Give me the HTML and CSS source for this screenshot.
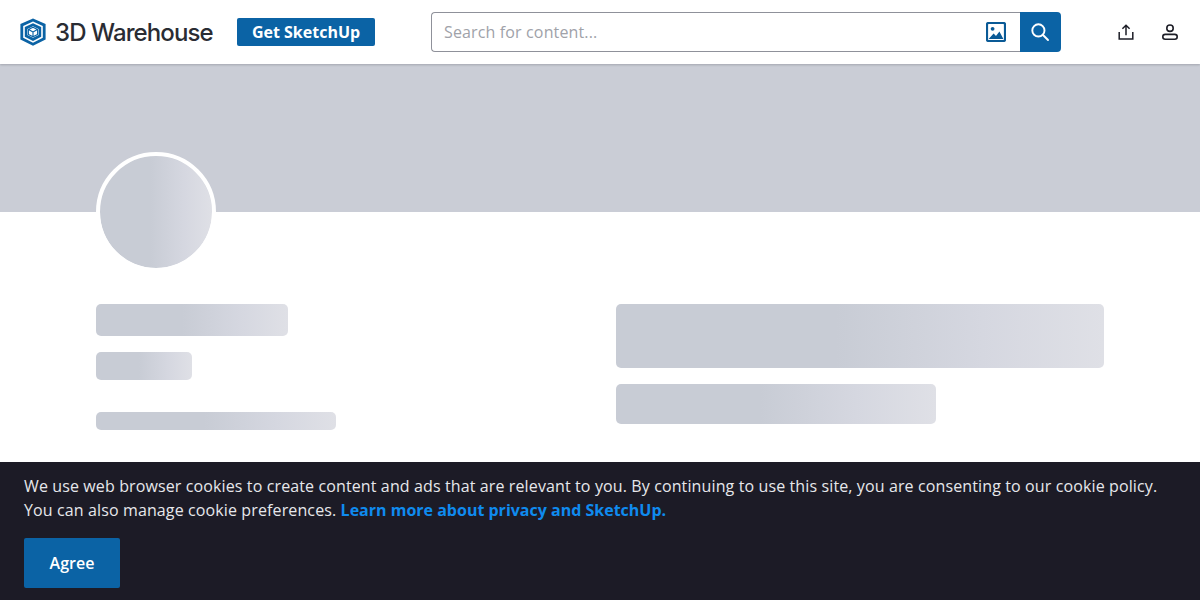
FILE: index.html
```html
<!DOCTYPE html>
<html lang="en">
<head>
<meta charset="utf-8">
<title>3D Warehouse</title>
<link rel="stylesheet" href="styles.css">
</head>
<body>
<header class="topbar">
  <a class="logo">
    <svg class="logo-mark" viewBox="0 0 26 28" width="26" height="28" fill="none">
      <path d="M13 0.4 25.6 6V21.4L13 27.8 0.4 21.4V6Z" fill="#0b63a5"/>
      <path d="M13 3.6 22.8 8V19.8L13 24.8 3.2 19.8V8Z" fill="#fff"/>
      <path d="M13 5.2 21.2 9V18.8L13 23 4.8 18.8V9Z" fill="#0b63a5"/>
      <path d="M13 8.2 18.6 11V17L13 19.8 7.4 17V11Z" fill="#fff"/>
      <path d="M13 9.2 17.6 11.5V16.5L13 18.8 8.4 16.5V11.5ZM8.6 11.6 13 13.9 17.4 11.6M13 13.9V18.6" stroke="#0b63a5" stroke-width="1.1" stroke-linejoin="round"/>
    </svg>
    <span class="logo-text">3D Warehouse</span>
  </a>
  <a class="get-btn">Get SketchUp</a>
  <form class="search">
    <span class="search-input">
      <span class="placeholder">Search for content...</span>
      <svg class="image-icon" viewBox="0 0 20 20" width="20" height="20" fill="none">
        <rect x="1" y="1" width="18" height="18" rx="1.5" stroke="#0a5a96" stroke-width="2.2"/>
        <circle cx="6.6" cy="6.8" r="1.9" fill="#0a5a96"/>
        <path d="M2.6 17 7.6 11.4 10 14 13.4 9.4 17.4 17Z" fill="#0a5a96"/>
      </svg>
    </span>
    <span class="search-btn">
      <svg viewBox="0 0 20 20" width="20" height="20" fill="none" stroke="#fff" stroke-width="1.9" stroke-linecap="round">
        <circle cx="8.4" cy="8.4" r="6.1"/>
        <path d="M13 13 18 18"/>
      </svg>
    </span>
  </form>
  <nav class="actions">
    <svg viewBox="0 0 18 18" width="18" height="18" fill="none" stroke="#1d1e27" stroke-width="1.5">
      <path d="M9 12.2V2.4M5.4 5.8 9 2.2 12.6 5.8"/>
      <path d="M2.2 9V16H15.8V9"/>
    </svg>
    <svg viewBox="0 0 18 18" width="18" height="18" fill="none" stroke="#1d1e27" stroke-width="1.6">
      <circle cx="9" cy="5.2" r="3.2"/>
      <rect x="1.8" y="11.4" width="14.4" height="4.8" rx="2.4"/>
    </svg>
  </nav>
</header>
<main>
  <div class="banner"></div>
  <div class="content">
    <div class="avatar skeleton"></div>
    <div class="columns">
      <div class="col-left">
        <div class="skeleton name"></div>
        <div class="skeleton handle"></div>
        <div class="skeleton stats"></div>
      </div>
      <div class="col-right">
        <div class="skeleton title"></div>
        <div class="skeleton subtitle"></div>
      </div>
    </div>
  </div>
</main>
<aside class="cookie">
  <p>We use web browser cookies to create content and ads that are relevant to you. By continuing to use this site, you are consenting to our cookie policy.<br>You can also manage cookie preferences. <a class="cookie-link">Learn more about privacy and SketchUp.</a></p>
  <button class="agree" type="button">Agree</button>
</aside>
</body>
</html>
```
FILE: styles.css
```css
* { box-sizing: border-box; }
html, body { margin: 0; height: 100%; overflow: hidden; }
body { font-family: "Open Sans", sans-serif; background: #fff; color: #1d1e27; }

.topbar {
  position: relative;
  z-index: 2;
  height: 64px;
  display: flex;
  align-items: center;
  padding-left: 20px;
  background: #fff;
  box-shadow: 0 1px 2px rgba(29, 30, 39, .22);
}
.logo { display: flex; align-items: center; width: 217px; }
.logo-mark { flex: none; margin-right: 9px; }
.logo-text {
  font-family: Inter, sans-serif;
  font-size: 24px;
  font-weight: 500;
  letter-spacing: -.9px;
  color: #2a2c33;
  white-space: nowrap;
}
.get-btn {
  width: 138px;
  height: 28px;
  display: flex;
  align-items: center;
  justify-content: center;
  background: #0b63a5;
  border-radius: 2px;
  color: #fff;
  font-size: 16px;
  font-weight: 700;
}
.search {
  display: flex;
  width: 630px;
  height: 40px;
  margin-left: 56px;
}
.search-input {
  flex: 1;
  display: flex;
  align-items: center;
  justify-content: space-between;
  padding: 0 14px 0 12px;
  border: 1px solid #8f919a;
  border-right: 0;
  border-radius: 4px 0 0 4px;
}
.placeholder { font-size: 16px; letter-spacing: .14px; color: #a0a2a9; }
.search-btn {
  width: 41px;
  display: flex;
  align-items: center;
  justify-content: center;
  padding-right: 2px;
  background: #0b63a5;
  border-radius: 0 4px 4px 0;
}
.actions {
  display: flex;
  gap: 26px;
  margin-left: 56px;
}

.banner { height: 148px; background: #cacdd6; }
.content { padding: 0 96px; }
.avatar {
  width: 120px;
  height: 120px;
  margin-top: -60px;
  position: relative;
  border: 4px solid #fff;
  background-clip: padding-box;
}
.columns {
  display: flex;
  gap: 40px;
  margin-top: 32px;
}
.col-left { width: 480px; }
.col-right { width: 488px; }
.skeleton {
  border-radius: 5px;
  background-image: linear-gradient(90deg, #c8ccd5 0%, #c8ccd5 45%, #d5d7e0 75%, #dfe0e6 100%);
}
.avatar.skeleton { border-radius: 50%; }
.name { width: 192px; height: 32px; }
.handle { width: 96px; height: 28px; margin-top: 16px; }
.stats { width: 240px; height: 18px; margin-top: 32px; }
.title { height: 64px; }
.subtitle { width: 320px; height: 40px; margin-top: 16px; }

.cookie {
  position: fixed;
  left: 0;
  right: 0;
  bottom: 0;
  z-index: 3;
  height: 138px;
  padding: 12px 24px;
  background: #1c1b26;
  color: #e6e7eb;
}
.cookie p {
  margin: 0;
  font-size: 16px;
  line-height: 24px;
  letter-spacing: .12px;
}
.cookie-link { color: #0f8bef; font-weight: 700; letter-spacing: 0; }
.agree {
  display: block;
  width: 96px;
  height: 50px;
  margin-top: 16px;
  border: 0;
  border-radius: 2px;
  background: #0b63a5;
  color: #fff;
  font: 600 16px "Open Sans", sans-serif;
}
```
